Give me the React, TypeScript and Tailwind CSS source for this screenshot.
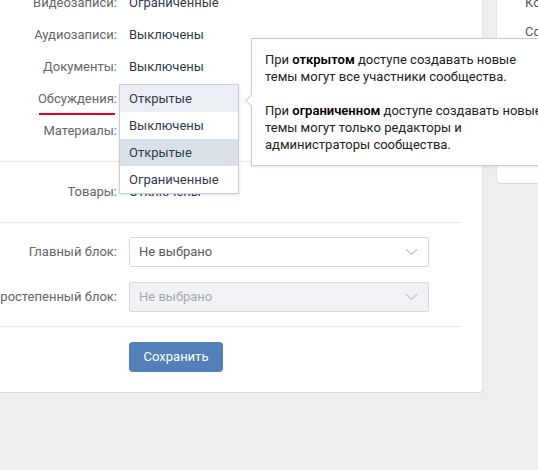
const FONT = "font-['Roboto','Liberation_Sans',sans-serif]";

const Row = ({
	label,
	children,
	className = "",
}: {
	label: string;
	children?: React.ReactNode;
	className?: string;
}) => (
	<div className={`relative flex h-[32px] items-center ${className}`}>
		<div className="flex w-[117px] shrink-0 justify-end whitespace-nowrap text-[#656565]">
			{label}
		</div>
		<div className="ml-[12px] whitespace-nowrap text-[#2d3b50]">{children}</div>
	</div>
);

const Chevron = () => (
	<svg width="13" height="8" viewBox="0 0 13 8" fill="none">
		<path d="M1 1.2 6.5 6.4 12 1.2" stroke="#c3c7cc" strokeWidth="1.4" />
	</svg>
);

const Select = ({ disabled }: { disabled?: boolean }) => (
	<div
		className={`flex h-[30px] w-[300px] items-center justify-between rounded-[2px] border border-[#d3d9de] pl-[9px] pr-[10px] ${
			disabled ? "bg-[#f0f2f5] text-[#a5a9ae]" : "bg-white text-[#5a5a5a]"
		}`}
	>
		<span>Не выбрано</span>
		<Chevron />
	</div>
);

const FieldRow = ({ label, disabled }: { label: string; disabled?: boolean }) => (
	<div className="flex items-center">
		<div className="flex w-[117px] shrink-0 justify-end whitespace-nowrap text-[#656565]">
			{label}
		</div>
		<div className="ml-[12px]">
			<Select disabled={disabled} />
		</div>
	</div>
);

const options = [
	{ text: "Открытые", bg: "bg-[#ebeef2]" },
	{ text: "Выключены", bg: "bg-white" },
	{ text: "Открытые", bg: "bg-[#d9e0e7]" },
	{ text: "Ограниченные", bg: "bg-white" },
];

const Dropdown = () => (
	<div className="absolute left-[119px] top-[1px] z-10 w-[120px] border border-[#c5d0db] bg-white shadow-[0_1px_3px_rgba(0,0,0,0.12)]">
		{options.map((o, i) => (
			<div
				key={i}
				className={`flex h-[27px] items-center pl-[9px] text-[#2d3b50] ${o.bg}`}
			>
				{o.text}
			</div>
		))}
	</div>
);

// line breaks are fixed so the wrap matches the original tooltip
const Tooltip = () => (
	<div className="absolute left-[251px] top-[-45px] z-10 w-[300px] whitespace-nowrap border border-[#c5d0db] bg-white px-[13px] pb-[12px] pt-[12px] leading-[17px] text-[#222] shadow-[0_1px_3px_rgba(0,0,0,0.1)]">
		<div className="absolute left-[-5px] top-[57px] h-[9px] w-[9px] rotate-45 border-b border-l border-[#c5d0db] bg-white" />
		<p>
			При <b className="font-semibold text-black">открытом</b> доступе создавать новые
			<br />
			темы могут все участники сообщества.
		</p>
		<p className="mt-[17px]">
			При <b className="font-semibold text-black">ограниченном</b> доступе создавать
			новые
			<br />
			темы могут только редакторы и
			<br />
			администраторы сообщества.
		</p>
	</div>
);

export default function App() {
	return (
		<div
			className={`flex h-[470px] w-[538px] items-start gap-[15px] overflow-hidden bg-[#edeef0] text-[13px] ${FONT}`}
		>
			<div className="relative w-[482px] shrink-0 rounded-br-[3px] bg-white pb-[20px] pr-[20px] shadow-[0_1px_0_0_#d7d8db,0_0_0_1px_#e3e4e8]">
				<div className="-mt-[13px] border-b border-[#e7e8ec] pb-[14px]">
					<Row label="Видеозаписи:">Ограниченные</Row>
					<Row label="Аудиозаписи:">Выключены</Row>
					<Row label="Документы:">Выключены</Row>
					<Row label="Обсуждения:">
						Открытые
						<span className="absolute left-[39px] top-[30px] h-[2px] w-[76px] bg-[#e3001b]" />
						<Dropdown />
						<Tooltip />
					</Row>
					<Row label="Материалы:">Выключены</Row>
				</div>

				<div className="border-b border-[#e7e8ec] py-[14px]">
					<Row label="Товары:">Отключены</Row>
				</div>

				<div className="flex flex-col gap-[15px] border-b border-[#e7e8ec] py-[14px]">
					<FieldRow label="Главный блок:" />
					<FieldRow label="Второстепенный блок:" disabled />
				</div>

				<div className="pl-[129px] pt-[15px]">
					<button className="h-[30px] w-[94px] rounded-[4px] bg-[#5181b8] text-white">
						Сохранить
					</button>
				</div>
			</div>

			<div className="h-[183px] w-[200px] shrink-0 rounded-bl-[4px] bg-white pl-[28px] shadow-[0_1px_0_0_#d7d8db,0_0_0_1px_#e3e4e8]">
				<div className="-mt-[12px] flex flex-col text-[#555]">
					<div className="flex h-[29px] items-center">Конкурсы</div>
					<div className="flex h-[29px] items-center">Сообщения</div>
					<div className="flex h-[29px] items-center">Участники</div>
					<div className="flex h-[29px] items-center">Ссылки</div>
					<div className="flex h-[29px] items-center">Адреса</div>
				</div>
			</div>
		</div>
	);
}
